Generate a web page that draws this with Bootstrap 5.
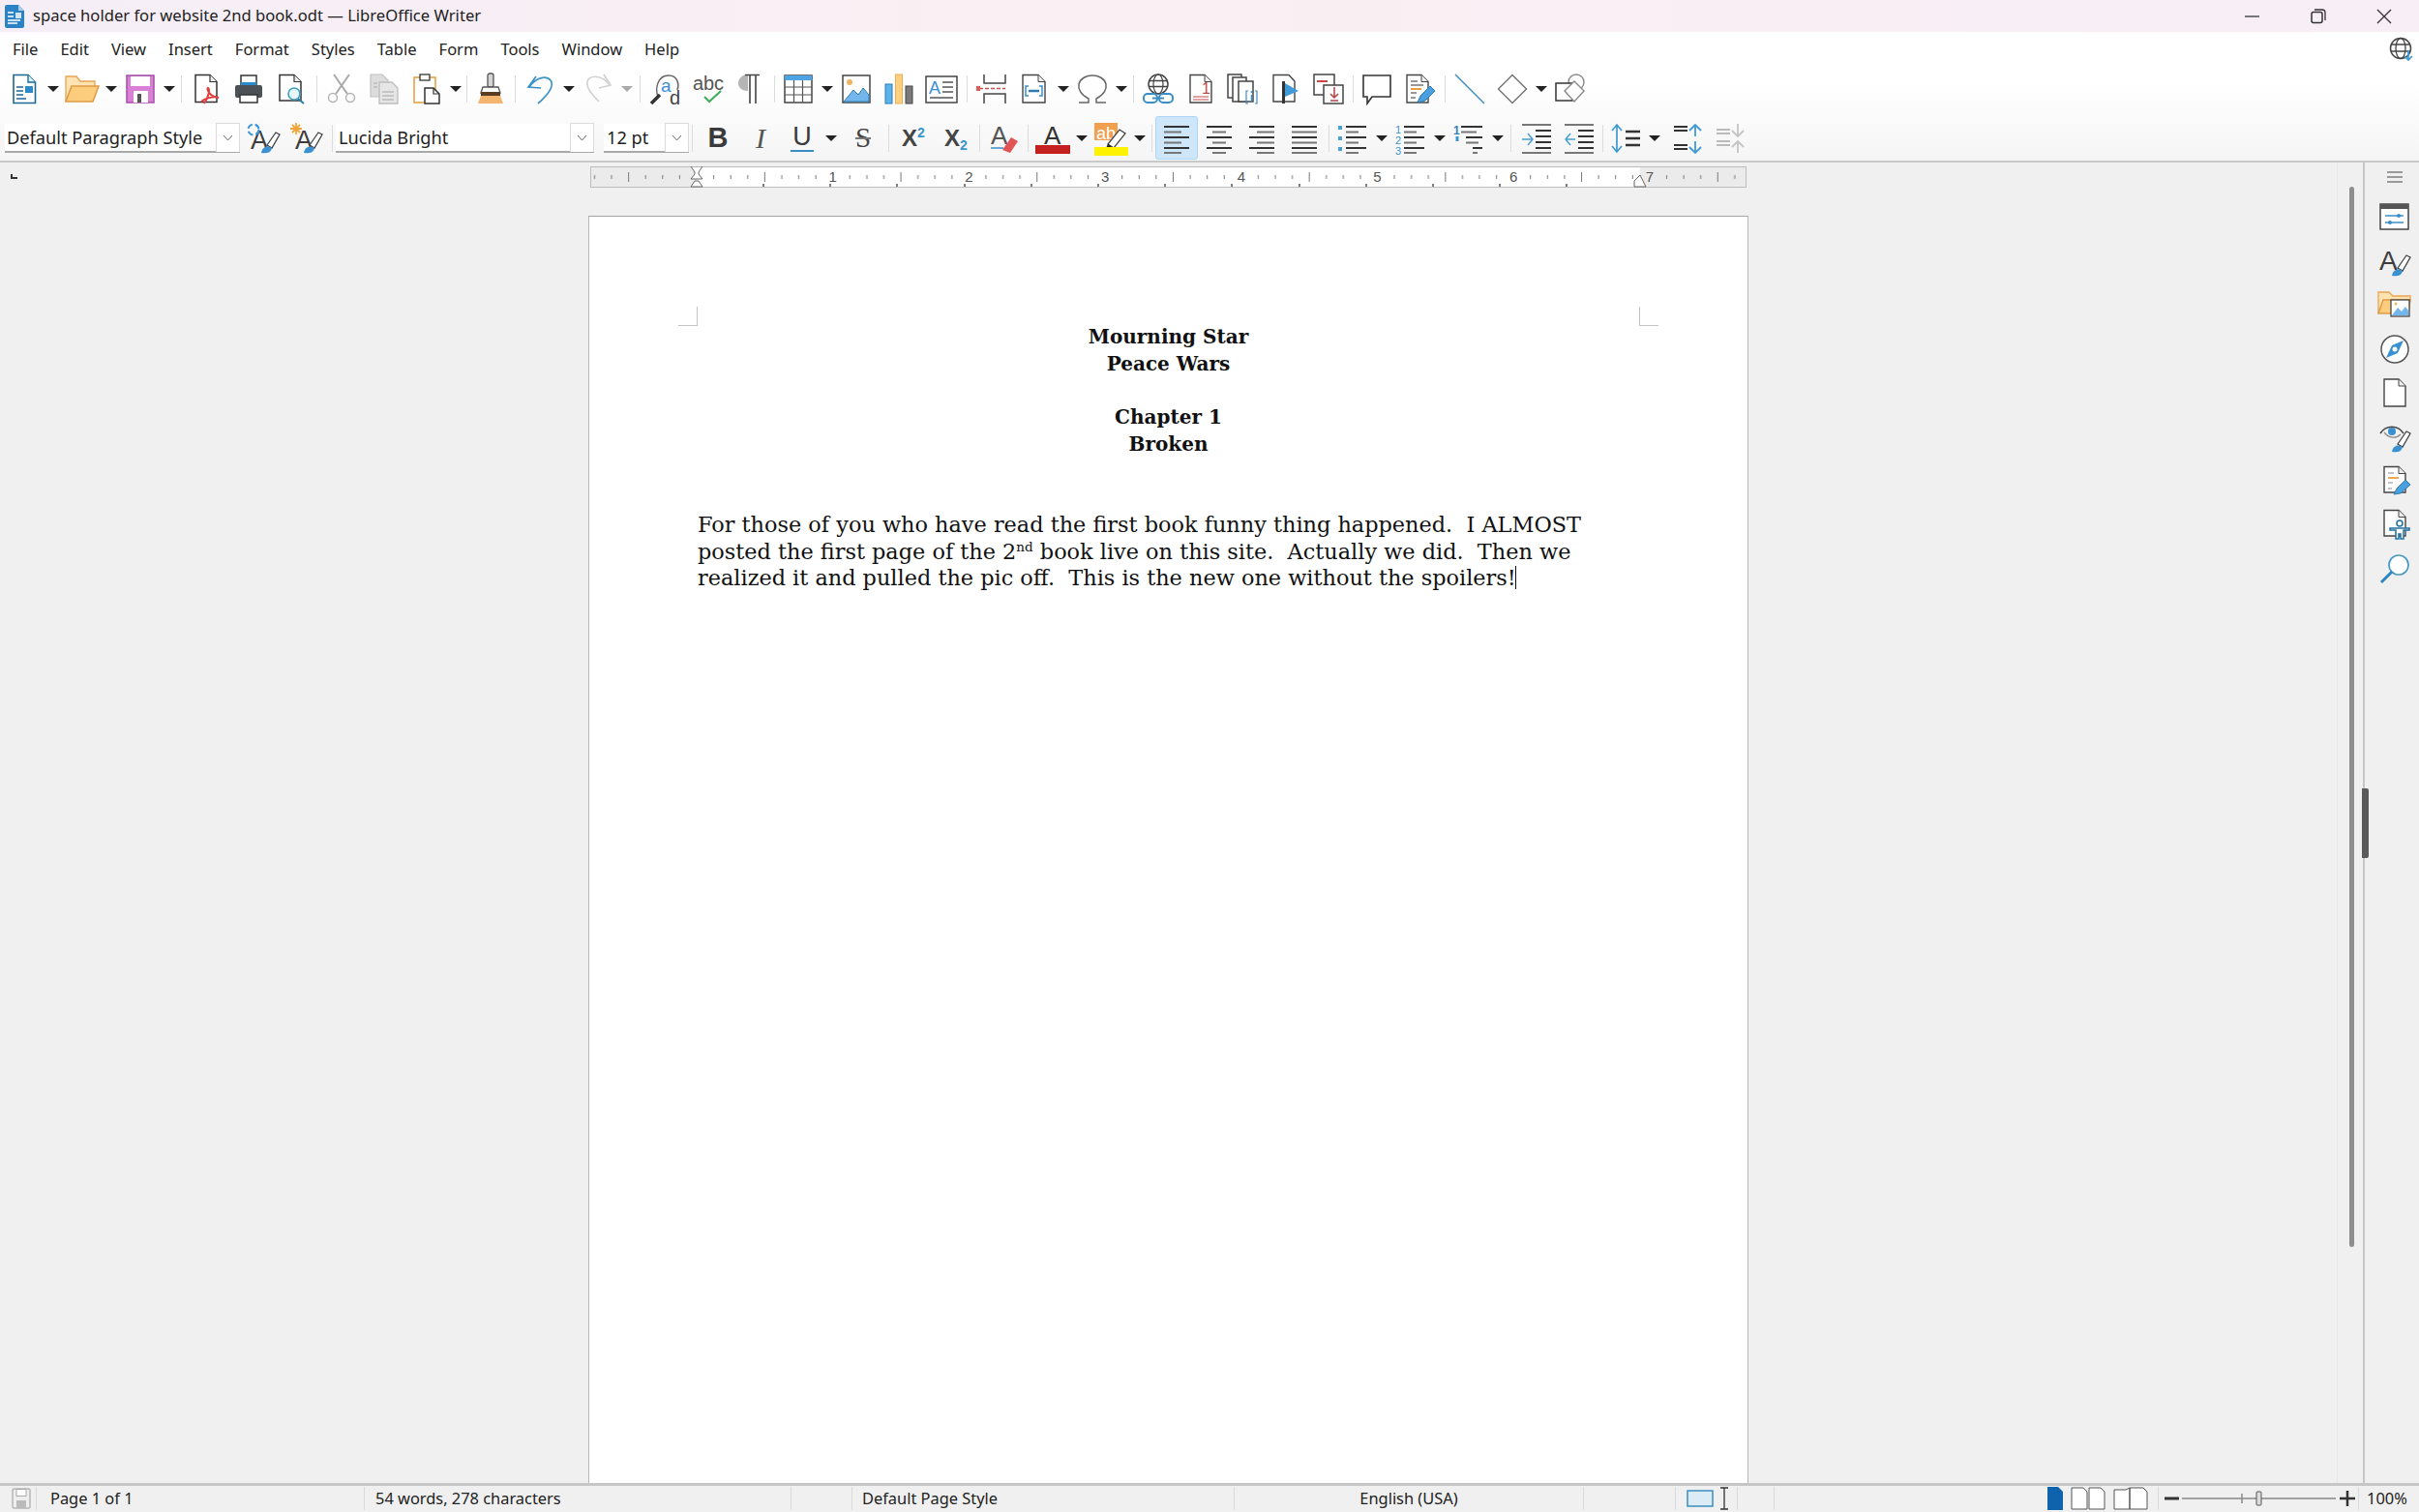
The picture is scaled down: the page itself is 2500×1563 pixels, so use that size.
<!DOCTYPE html>
<html lang="en">
<head>
<meta charset="utf-8">
<title>space holder for website 2nd book.odt — LibreOffice Writer</title>
<link href="https://cdn.jsdelivr.net/npm/bootstrap@5.3.0/dist/css/bootstrap.min.css" rel="stylesheet">
<style>
html,body{height:100%;overflow:hidden}
body{font-family:"Noto Sans","Open Sans",sans-serif;color:#222;background:#f0f0f0;font-size:16px}
symbol{overflow:visible}
.ico{width:32px;height:32px;overflow:visible;flex:none;display:block}
.app{height:1563px}
.titlebar{height:33px;background:linear-gradient(90deg,#f6eef7,#faf0f3 45%,#f7eef6);font-size:16.6px;padding-left:4px;padding-right:2px}
.title-ico{width:22px;height:24px;margin-right:8px}
.win-btn{width:68px;display:flex;justify-content:center}
.chrome{background:linear-gradient(180deg,#fff 0,#fff 40%,#f5f5f5 100%);height:135px;border-bottom:2px solid #c9c9c9}
.menubar{height:36px;padding:0 5px 0 13px;font-size:16.5px;gap:23px}
.menubar a{color:#222;text-decoration:none}
.globe{width:26px;height:26px}
.tb1{height:46px;padding-left:3px}
.tb2{height:47px;margin-top:4px;padding-left:5px}
.tbtn{width:44px;height:45px;padding:0;border:1px solid transparent;border-radius:3px;display:flex;align-items:center;justify-content:center;flex:none;color:#333}
.tbtn.on{background:#cde6fa;border-color:#acd6f5}
.tarr{width:16px;height:45px;flex:none;display:flex;align-items:center;justify-content:center}
.tarr::after{content:"";border-left:6px solid transparent;border-right:6px solid transparent;border-top:6px solid #222}
.tarr.dim::after{border-top-color:#aaa}
.tsep{height:45px;flex:none;display:flex;align-items:center;justify-content:center}
.tsep::after{content:"";width:1px;height:28px;background:#dcdcdc}
.w3{width:3px}.w3::after,.w4n::after{display:none}
.w4,.w4n{width:4px}.w5{width:5px}.w6{width:6px}.w7{width:7px}.w8{width:8px}.w10{width:10px}
.combo{height:30px;background:#fff;border-bottom:2px solid #a9a9a9;font-size:18.2px;display:flex;align-items:center;flex:none;color:#222}
.combo-text{flex:1;padding-left:2px;padding-top:2px;white-space:nowrap;overflow:hidden}
.combo-btn{width:25px;height:30px;border:1px solid #dcdcdc;border-bottom:0;display:flex;align-items:center;justify-content:center;background:#fff}
.combo-btn svg{width:11px;height:7px}
.c-para{width:243px;margin-right:3px}
.c-font{width:267px;margin-right:10px}
.c-size{width:88px}
.c-font .combo-text,.c-size .combo-text{padding-left:3px}
.fmt{font-family:"Liberation Sans",sans-serif;font-size:27px;line-height:1;color:#3a3a3a}
.fmt-b{font-weight:700;font-size:29px;padding-left:2px}
.fmt-i{font-style:italic;font-family:"Liberation Serif",serif;font-size:30px;color:#555;padding-left:2px}
.fmt-u{border-bottom:2px solid #3a8fc9;line-height:27px;padding:0 2px;display:block}
.fmt-s{text-decoration:line-through;text-decoration-color:#777;font-family:"Liberation Serif",serif;font-size:29px;color:#444}
.fmt-x{font-size:24px;font-weight:700;color:#444}
.fmt-x sup,.fmt-x sub{font-size:14px;color:#3a96cf;top:-.6em;position:relative;vertical-align:baseline}
.fmt-x sub{top:.3em}
.workspace{flex:1;min-height:0}
.doc-col{width:2415px;background:#f0f0f0;min-height:0}
.ruler-row{height:55px;padding-top:4px}
.ruler-mark{width:7px;height:5px;border-left:2px solid #333;border-bottom:2px solid #333;position:absolute;left:11px;top:180px}
.ruler{width:1195px;height:22px;display:block}
.page{width:1199px;flex:1;background:#fff;border:1px solid #b8b8b8;border-top-color:#a4a4a4;border-bottom:0;padding:111px 112px 112px;position:relative;font-family:"DejaVu Serif","Liberation Serif",serif;font-size:22.4px;line-height:27.7px;color:#111;min-height:0}
.crop{position:absolute;width:20px;height:20px;top:93px;border:0 solid #c4c4c4}
.crop-l{left:92px;border-right-width:1px;border-bottom-width:1px}
.crop-r{right:92px;border-left-width:1px;border-bottom-width:1px}
.head-text{font-weight:700;text-align:center;font-size:20px}
.body-text{white-space:nowrap;margin-top:55.4px}
.body-text sup{font-size:13.5px;top:-.6em;line-height:0}
.caret-bar{display:inline-block;width:1px;height:24px;background:#111;vertical-align:-4px;margin-left:-1px}
.scroll-col{width:27px;background:#f0f0f0;border-left:1px solid #e6e6e6;display:flex;justify-content:center;padding-top:25px;padding-left:2px;padding-right:0}
.scroll-thumb{width:5px;height:1096px;background:#8e8e8e;border-radius:3px}
.side-col{flex:1;background:#f0f0f0;border-left:2px solid #c6c6c6;position:relative;padding:3px 0 0 6px}
.side-ham{height:24px;margin-bottom:7px;display:flex;align-items:center;justify-content:center}
.side-ico{height:45.4px;display:flex;align-items:center;justify-content:center}
.side-grip{position:absolute;left:-3px;top:647px;width:7px;height:72px;background:#5a5a5a;border-radius:0 2px 2px 0}
.statusbar{height:30px;border-top:3px solid #c6c6c6;background:#f0f0f0;font-size:16.4px;flex:none}
.seg{height:24px;border-right:1px solid #dadada;display:flex;align-items:center;flex:none;white-space:nowrap;overflow:visible;margin-top:1px}
.s1{width:38px;padding-left:12px}
.s2{width:339px;padding-left:14px}
.s3{width:441px;padding-left:11px}
.s4{width:63px}
.s5{width:395px;padding-left:10px}
.s6{width:361px;justify-content:center}
.s7{width:95px}
.s8{width:64px;padding-left:11px;gap:6px}
.s9{width:38px}
.s10{width:397px;justify-content:flex-end;gap:8px;padding-right:10px}
.s11{width:207px;padding-left:6px}
.s12{flex:1;border-right:0;padding-left:8px}
</style>
</head>
<body>
<svg class="d-none" xmlns="http://www.w3.org/2000/svg">
<symbol id="new" viewBox="0 0 32 32" overflow="visible"><path d="M5 1.5H20L27.5 9V30.5H5Z" fill="#fff" stroke="#1b6a96" stroke-width="1.6"/><path d="M20 1.5V9H27.5" fill="#dff0fa" stroke="#1b6a96" stroke-width="1.4"/><path d="M8 14H15M8 18H15M8 22H15M8 26H18" stroke="#1b6a96" stroke-width="1.5"/><rect x="17" y="13" width="8" height="7" fill="#2e8bc9"/></symbol>
<symbol id="open" viewBox="0 0 32 32" overflow="visible"><path d="M-1 29V3H10L14 8H29V14H5Z" fill="#fde3b1" stroke="#e8a552" stroke-width="1.3"/><path d="M-1 29L5 13H33L27 29Z" fill="#fbcd7c" stroke="#e09a45" stroke-width="1.5"/></symbol>
<symbol id="save" viewBox="0 0 32 32" overflow="visible"><rect x="2" y="2" width="28" height="28" fill="#d97fd6" stroke="#a450a8" stroke-width="1.5"/><rect x="6" y="3" width="20" height="10" fill="#fff"/><rect x="9" y="18" width="15" height="12" fill="#fff"/><rect x="13" y="21" width="4" height="9" fill="#555"/></symbol>
<symbol id="pdf" viewBox="0 0 32 32" overflow="visible"><path d="M5 1.5H20L27 8.5V29.5H5Z" fill="#fff" stroke="#333" stroke-width="1.5"/><path d="M20 1.5V8.500H27" fill="#eee" stroke="#333" stroke-width="1.2"/><path d="M14 31C19 24 20 16 18 15C16 15 19 24 29 25C23 23 14 26 11 29" fill="none" stroke="#e23d3d" stroke-width="2"/></symbol>
<symbol id="print" viewBox="0 0 32 32" overflow="visible"><rect x="8" y="2" width="16" height="12" fill="#fff" stroke="#333" stroke-width="1.5"/><rect x="8" y="9" width="16" height="3" fill="#2b8bcc"/><rect x="2" y="12" width="28" height="13" rx="2" fill="#4b5157"/><rect x="7" y="22" width="18" height="8" fill="#fff" stroke="#333" stroke-width="1.5"/></symbol>
<symbol id="prev" viewBox="0 0 32 32" overflow="visible"><path d="M4 1.500H19L26 8.500V28H4Z" fill="#fff" stroke="#333" stroke-width="1.500"/><path d="M19 1.500V8.500H26" fill="#eee" stroke="#333" stroke-width="1.200"/><circle cx="19" cy="21" r="6" fill="#e8f7fb" stroke="#3aa0c2" stroke-width="1.600"/><path d="M23 26L29 31" stroke="#2c7da8" stroke-width="2"/></symbol>
<symbol id="cut" viewBox="0 0 32 32" overflow="visible"><path d="M8 1L22 21M24 1L10 21" stroke="#a9a9a9" stroke-width="2"/><circle cx="7" cy="25" r="4.500" fill="none" stroke="#b5b5b5" stroke-width="1.500"/><circle cx="25" cy="25" r="4.500" fill="none" stroke="#b5b5b5" stroke-width="1.500"/></symbol>
<symbol id="copy" viewBox="0 0 32 32" overflow="visible"><path d="M2 1H14L20 7V24H2Z" fill="#ddd" stroke="#c2c2c2" stroke-width="1.200"/><path d="M11 9H24L30 15V31H11Z" fill="#e6e6e6" stroke="#bdbdbd" stroke-width="1.300"/><path d="M14 19H26M14 23H26M14 27H26M5 10H9M5 14H9" stroke="#bbb" stroke-width="1.300"/></symbol>
<symbol id="paste" viewBox="0 0 32 32" overflow="visible"><rect x="3" y="4" width="22" height="26" fill="#fff" stroke="#e6a445" stroke-width="1.600"/><rect x="9" y="1" width="10" height="6" fill="#fff" stroke="#444" stroke-width="1.400"/><path d="M14 15H23L29 21V31H14Z" fill="#fff" stroke="#333" stroke-width="1.500"/><path d="M23 15V21H29" fill="none" stroke="#333" stroke-width="1.200"/></symbol>
<symbol id="clone" viewBox="0 0 32 32" overflow="visible"><rect x="13" y="0" width="6" height="14" rx="2" fill="#d5d5d5" stroke="#555" stroke-width="1.300"/><path d="M6 20L8 14H24L26 20Z" fill="#fff" stroke="#555" stroke-width="1.300"/><rect x="6" y="19" width="20" height="4" fill="#5b3c1e"/><path d="M6 23H26L29 31H3Z" fill="#f3b56f"/></symbol>
<symbol id="undo" viewBox="0 0 32 32" overflow="visible"><path d="M12 3L4 14L17 15M5 14C11 5 22 1 27 7C32 14 22 24 14 31" fill="none" stroke="#3d93c8" stroke-width="1.700"/></symbol>
<symbol id="redo" viewBox="0 0 32 32" overflow="visible"><path d="M22 1L29 12L17 15M28 12C22 3 11 1 6 6C2 13 9 21 17 29" fill="none" stroke="#d2d2d2" stroke-width="1.700"/></symbol>
<symbol id="find" viewBox="0 0 32 32" overflow="visible"><path d="M8 24C5 16 7 2 19 2C29 2 30 12 28 17" fill="none" stroke="#666" stroke-width="1.400"/><path d="M1 31L10 22" stroke="#333" stroke-width="3.500"/><text x="11" y="19" font-family="Liberation Sans,sans-serif" font-size="19" fill="#3c8fd6">a</text><text x="20" y="32" font-family="Liberation Sans,sans-serif" font-size="20" fill="#444">d</text></symbol>
<symbol id="spell" viewBox="0 0 32 32" overflow="visible"><text x="0" y="17" font-family="Liberation Sans,sans-serif" font-size="20" fill="#555" textLength="32">abc</text><path d="M12 24L17 29L29 18" fill="none" stroke="#3fae5a" stroke-width="2"/></symbol>
<symbol id="pilcrow" viewBox="0 0 32 32" overflow="visible"><path d="M13 1C6 1 3 6 3 10C3 14 6 18 13 18Z" fill="#b5b5b5"/><path d="M10 1.500H25M15 1.500V31M21 1.500V31" stroke="#444" stroke-width="1.600" fill="none"/></symbol>
<symbol id="table" viewBox="0 0 32 32" overflow="visible"><rect x="2" y="2" width="28" height="28" fill="#fff" stroke="#444" stroke-width="1.500"/><rect x="2" y="2" width="28" height="5" fill="#4da3e4"/><path d="M2 14H30M2 22H30M11.500 7V30M20.500 7V30" stroke="#555" stroke-width="1.200"/></symbol>
<symbol id="image" viewBox="0 0 32 32" overflow="visible"><rect x="2" y="2" width="28" height="28" fill="#fff" stroke="#444" stroke-width="1.500"/><circle cx="9" cy="9" r="3" fill="#f0b35f"/><path d="M3 29L13 17L18 22L23 15L29 22V29Z" fill="#72b6ec" stroke="#2d7fb6" stroke-width="1"/></symbol>
<symbol id="chart" viewBox="0 0 32 32" overflow="visible"><rect x="2" y="11" width="7" height="20" fill="#5eb2ec" stroke="#2a7cb4"/><rect x="12.500" y="1" width="7" height="30" fill="#fdd07f" stroke="#e9ae55"/><rect x="23" y="13" width="7" height="18" fill="#7a7a7a" stroke="#444"/></symbol>
<symbol id="textbox" viewBox="0 0 32 32" overflow="visible"><rect x="0" y="3" width="32" height="27" fill="#fff" stroke="#444" stroke-width="1.500"/><text x="3" y="21" font-family="Liberation Sans,sans-serif" font-size="18" fill="#3c8fd6">A</text><path d="M17 9H28M17 14H28M17 19H28M4 25H28" stroke="#555" stroke-width="1.500"/></symbol>
<symbol id="break" viewBox="0 0 32 32" overflow="visible"><path d="M8 1V10H30V1M8 31V21H30V31" fill="none" stroke="#444" stroke-width="1.500"/><path d="M3 15.500H30" stroke="#c45050" stroke-width="1.300" stroke-dasharray="4 2"/><rect x="0" y="13" width="4" height="5" fill="#e05a5a"/></symbol>
<symbol id="field" viewBox="0 0 32 32" overflow="visible"><path d="M4 1.500H20L27 8.500V30H4Z" fill="#fff" stroke="#444" stroke-width="1.400"/><path d="M20 1.500V8.500H27" fill="#eee" stroke="#444"/><path d="M10 13H7V23H10M21 13H24V23H21" fill="none" stroke="#3a8ec8" stroke-width="1.500"/><path d="M10 18H21" stroke="#2e7bb0" stroke-width="2.500"/></symbol>
<symbol id="omega" viewBox="0 0 32 32" overflow="visible"><path d="M2 30H12V26C4 22 1 16 2 11C5 -1 27 -1 30 11C31 16 28 22 20 26V30H30" fill="none" stroke="#666" stroke-width="1.500"/></symbol>
<symbol id="link" viewBox="0 0 32 32" overflow="visible"><circle cx="16" cy="11" r="10" fill="none" stroke="#444" stroke-width="1.500"/><ellipse cx="16" cy="11" rx="5" ry="10" fill="none" stroke="#444" stroke-width="1.200"/><path d="M6 7.500H26M6 13.500H26" stroke="#444" stroke-width="1.500"/><rect x="1" y="21" width="14" height="9" rx="4" fill="#fff" stroke="#3a8ec8" stroke-width="2"/><rect x="17" y="21" width="14" height="9" rx="4" fill="#fff" stroke="#3a8ec8" stroke-width="2"/><path d="M10 25.500H22" stroke="#3a8ec8" stroke-width="2"/></symbol>
<symbol id="foot" viewBox="0 0 32 32" overflow="visible"><path d="M5 1.500H20L27 8.500V30H5Z" fill="#fff" stroke="#444" stroke-width="1.400"/><path d="M20 1.500V8.500H27" fill="#eee" stroke="#444"/><text x="17" y="21" font-family="Liberation Sans,sans-serif" font-size="16" fill="#c84848">1</text><path d="M8 24H24M8 27H24" stroke="#c84848" stroke-width="1.200"/></symbol>
<symbol id="endn" viewBox="0 0 32 32" overflow="visible"><rect x="0" y="1" width="14" height="24" fill="#fff" stroke="#444" stroke-width="1.500"/><rect x="5" y="4" width="14" height="25" fill="#fff" stroke="#444" stroke-width="1.500"/><rect x="11" y="8" width="15" height="21" fill="#fff" stroke="#444" stroke-width="1.500"/><path d="M21 18H19V31H21M28 18H30V31H28" fill="none" stroke="#3a8ec8" stroke-width="1.200"/><path d="M24.500 22V29M24.500 18V20" stroke="#3a8ec8" stroke-width="1.500"/></symbol>
<symbol id="bookm" viewBox="0 0 32 32" overflow="visible"><path d="M3 1.500H19L25 8V29H3Z" fill="#fff" stroke="#444" stroke-width="1.400"/><rect x="12" y="8" width="3" height="23" fill="#333"/><path d="M15 10L29 18L15 24Z" fill="#3f9ad9"/></symbol>
<symbol id="xref" viewBox="0 0 32 32" overflow="visible"><rect x="1" y="1" width="21" height="21" fill="#fff" stroke="#444" stroke-width="1.500"/><rect x="11" y="12" width="20" height="19" fill="#fff" stroke="#444" stroke-width="1.500"/><path d="M4 8H15" stroke="#c84848" stroke-width="2"/><path d="M22 14V24M18 21L22 25L26 21M18 28H26" stroke="#b84040" stroke-width="1.500" fill="none"/></symbol>
<symbol id="comment" viewBox="0 0 32 32" overflow="visible"><path d="M2 2H30V24H11L6 31V24H2Z" fill="#fff" stroke="#333" stroke-width="1.600"/></symbol>
<symbol id="track" viewBox="0 0 32 32" overflow="visible"><path d="M3 1.500H18L25 8.500V30H3Z" fill="#fff" stroke="#444" stroke-width="1.400"/><path d="M18 1.500V8.500H25" fill="#eee" stroke="#444"/><path d="M7 8H14M7 12H20M7 20H13M7 25H12" stroke="#777" stroke-width="1.300"/><path d="M7 16H18" stroke="#ea9f3f" stroke-width="2"/><path d="M14 30L17 23L27 13L32 18L22 28Z" fill="#4a9fdf" stroke="#2b7cb4"/></symbol>
<symbol id="line" viewBox="0 0 32 32" overflow="visible"><path d="M1 1L31 31" stroke="#3f8dbe" stroke-width="1.500"/></symbol>
<symbol id="diamond" viewBox="0 0 32 32" overflow="visible"><path d="M16 1.500L30.500 16L16 30.500L1.500 16Z" fill="#fff" stroke="#777" stroke-width="1.500"/></symbol>
<symbol id="shapes" viewBox="0 0 32 32" overflow="visible"><circle cx="22" cy="9" r="8" fill="#fff" stroke="#888" stroke-width="1.400"/><rect x="1" y="10" width="17" height="18" fill="#fff" stroke="#333" stroke-width="1.500"/><path d="M20 8L30 18L20 29L10 18Z" fill="#fff" stroke="#888" stroke-width="1.400"/></symbol>
<symbol id="brush" viewBox="0 0 32 32" overflow="visible"><path d="M19 23L28 10L32 12L24 26Z" fill="#fff" stroke="#444" stroke-width="1.300"/><path d="M13 31C14 25 19 23 24 26C23 31 18 32 13 31Z" fill="#3a91d2"/></symbol>
<symbol id="stup" viewBox="0 0 32 32" overflow="visible"><text x="2" y="27" font-family="Liberation Sans,sans-serif" font-size="27" fill="#3d3d3d">A</text><use href="#brush"/><circle cx="5" cy="7" r="5.500" fill="none" stroke="#3a96d6" stroke-width="2" stroke-dasharray="6 3"/></symbol>
<symbol id="stnew" viewBox="0 0 32 32" overflow="visible"><text x="4" y="27" font-family="Liberation Sans,sans-serif" font-size="27" fill="#3d3d3d">A</text><use href="#brush"/><path d="M5 0V12M-1 6H11M1 2L9 10M9 2L1 10" stroke="#f0a63c" stroke-width="1.800"/></symbol>
<symbol id="clear" viewBox="0 0 32 32" overflow="visible"><text x="3" y="22" font-family="Liberation Sans,sans-serif" font-size="26" fill="#555">A</text><path d="M3 26H16" stroke="#3a8ec8" stroke-width="1.500"/><path d="M15 28L24 15L31 19L23 31Z" fill="#e25454"/></symbol>
<symbol id="fcolor" viewBox="0 0 32 32" overflow="visible"><text x="7" y="22" font-family="Liberation Sans,sans-serif" font-size="26" fill="#333">A</text><rect x="-2" y="23" width="36" height="9" fill="#c42020"/></symbol>
<symbol id="hilite" viewBox="0 0 32 32" overflow="visible"><rect x="-1" y="0" width="24" height="18" fill="#f0a04f"/><text x="1" y="17" font-family="Liberation Sans,sans-serif" font-size="18" fill="#fff">ab</text><path d="M13 22L25 7L31 11L19 26Z" fill="#fff" stroke="#444" stroke-width="1.300"/><path d="M13 22L19 26L11 26Z" fill="#222"/><rect x="-1" y="25" width="35" height="9" fill="#fff200"/></symbol>
<symbol id="al" viewBox="0 0 32 32" overflow="visible"><path d="M3 4H29M3 15H29M3 26H29" stroke="#333" stroke-width="2"/><path d="M3 9.500H21M3 20.500H21M3 31H21" stroke="#777" stroke-width="2"/></symbol>
<symbol id="ac" viewBox="0 0 32 32" overflow="visible"><path d="M3 4H29M3 15H29M3 26H29" stroke="#333" stroke-width="2"/><path d="M9 9.500H23M9 20.500H23M9 31H23" stroke="#777" stroke-width="2"/></symbol>
<symbol id="ar" viewBox="0 0 32 32" overflow="visible"><path d="M3 4H29M3 15H29M3 26H29" stroke="#333" stroke-width="2"/><path d="M11 9.500H29M11 20.500H29M11 31H29" stroke="#777" stroke-width="2"/></symbol>
<symbol id="aj" viewBox="0 0 32 32" overflow="visible"><path d="M3 4H29M3 15H29M3 26H29" stroke="#333" stroke-width="2"/><path d="M3 9.500H29M3 20.500H29M3 31H29" stroke="#777" stroke-width="2"/></symbol>
<symbol id="bull" viewBox="0 0 32 32" overflow="visible"><path d="M1 5H5M1 16H5M1 27H5" stroke="#4a9fd4" stroke-width="4"/><path d="M9 4H30M9 15H30M9 26H30" stroke="#333" stroke-width="2"/><path d="M9 9.500H22M9 20.500H22M9 31H22" stroke="#777" stroke-width="2"/></symbol>
<symbol id="numb" viewBox="0 0 32 32" overflow="visible"><text x="0" y="11" font-family="Liberation Sans,sans-serif" font-size="11" fill="#3a96cf">1</text><text x="0" y="22" font-family="Liberation Sans,sans-serif" font-size="11" fill="#3a96cf">2</text><text x="0" y="33" font-family="Liberation Sans,sans-serif" font-size="11" fill="#3a96cf">3</text><path d="M9 4H30M9 15H30M9 26H30" stroke="#333" stroke-width="2"/><path d="M9 9.500H22M9 20.500H22M9 31H22" stroke="#777" stroke-width="2"/></symbol>
<symbol id="outl" viewBox="0 0 32 32" overflow="visible"><text x="0" y="12" font-family="Liberation Sans,sans-serif" font-size="12" font-weight="700" fill="#2e83bd">1</text><path d="M8 4H30M13 15H30M20 26H30" stroke="#333" stroke-width="2"/><path d="M8 9.500H24M13 20.500H26M20 31H25" stroke="#777" stroke-width="2"/><path d="M4 14V19" stroke="#3a96cf" stroke-width="3"/></symbol>
<symbol id="indi" viewBox="0 0 32 32" overflow="visible"><path d="M1 2H31M1 31H31" stroke="#777" stroke-width="2"/><path d="M15 8H31M15 14H31M15 20H31M15 26H31" stroke="#333" stroke-width="1.800"/><path d="M1 17H11M7 11L12 17L7 23" fill="none" stroke="#4a9fd4" stroke-width="1.500"/></symbol>
<symbol id="indd" viewBox="0 0 32 32" overflow="visible"><path d="M1 2H31M1 31H31" stroke="#777" stroke-width="2"/><path d="M15 8H31M15 14H31M15 20H31M15 26H31" stroke="#333" stroke-width="1.800"/><path d="M12 17H2M7 11L2 17L7 23" fill="none" stroke="#4a9fd4" stroke-width="1.500"/></symbol>
<symbol id="lsp" viewBox="0 0 32 32" overflow="visible"><path d="M7 2V30M2 8L7 2L12 8M2 24L7 30L12 24" fill="none" stroke="#3f9ad4" stroke-width="1.700"/><path d="M16 9H31M16 16H31M16 23H31" stroke="#333" stroke-width="2.500"/></symbol>
<symbol id="pinc" viewBox="0 0 32 32" overflow="visible"><path d="M2 4H16M2 8H16M2 23H16M2 27H16" stroke="#333" stroke-width="2"/><path d="M24 2V14M18 8L24 2L30 8M24 19V31M18 25L24 31L30 25" fill="none" stroke="#3f9ad4" stroke-width="1.800"/></symbol>
<symbol id="pdec" viewBox="0 0 32 32" overflow="visible"><path d="M2 7H16M2 11H16M2 19H16M2 23H16" stroke="#bbb" stroke-width="2"/><path d="M24 1V13M18 8L24 14L30 8M24 19V31M18 25L24 19L30 25" fill="none" stroke="#c4c4c4" stroke-width="1.800"/></symbol>
<symbol id="sdeck" viewBox="0 0 32 32" overflow="visible"><rect x="1" y="2" width="29" height="26" fill="#fff" stroke="#444" stroke-width="1.500"/><rect x="1" y="2" width="29" height="5" fill="#555"/><path d="M6 14H25M6 21H25" stroke="#3a8ec8" stroke-width="1.300"/><circle cx="20" cy="14" r="2" fill="#3a8ec8"/><circle cx="11" cy="21" r="2" fill="#3a8ec8"/></symbol>
<symbol id="sstyle" viewBox="0 0 32 32" overflow="visible"><text x="0" y="25" font-family="Liberation Sans,sans-serif" font-size="28" fill="#3d3d3d">A</text><use href="#brush"/></symbol>
<symbol id="sgal" viewBox="0 0 32 32" overflow="visible"><path d="M-1 25V3H10L14 7H32V12H4Z" fill="#fde3b1" stroke="#e8a552" stroke-width="1.300"/><path d="M-1 25L4 11H32L30 25Z" fill="#fbcd7c" stroke="#e09a45" stroke-width="1.300"/><rect x="12" y="11" width="19" height="17" fill="#fff" stroke="#444" stroke-width="1.300"/><path d="M13 27L19 19L23 23L27 18L30 22V27Z" fill="#72b6ec"/><circle cx="17" cy="15" r="1.500" fill="#f0b35f"/></symbol>
<symbol id="snav" viewBox="0 0 32 32" overflow="visible"><ellipse cx="16" cy="16" rx="14" ry="14" fill="#fff" stroke="#555" stroke-width="1.500"/><path d="M25 7L19 20L7 25L13 12Z" fill="#3a91d2"/><circle cx="16" cy="16" r="2.500" fill="#fff"/></symbol>
<symbol id="spage" viewBox="0 0 32 32" overflow="visible"><path d="M5 2H20L27 9V30H5Z" fill="#fff" stroke="#444" stroke-width="1.400"/><path d="M20 2V9H27" fill="#eee" stroke="#444"/></symbol>
<symbol id="sinsp" viewBox="0 0 32 32" overflow="visible"><path d="M1 12C7 3 19 3 25 12" fill="none" stroke="#444" stroke-width="1.600"/><path d="M5 11C10 17 17 18 22 13" fill="none" stroke="#888" stroke-width="1.200"/><circle cx="13" cy="10" r="4" fill="#3a91d2"/><use href="#brush"/></symbol>
<symbol id="strack" viewBox="0 0 32 32" overflow="visible"><path d="M5 1.500H20L27 8.500V28H5Z" fill="#fff" stroke="#444" stroke-width="1.400"/><path d="M20 1.500V8.500H27" fill="#eee" stroke="#444"/><path d="M9 8H15M9 18H14M9 24H13" stroke="#888" stroke-width="1.200"/><path d="M9 13H20" stroke="#ea9f3f" stroke-width="1.800"/><path d="M15 30L18 24L27 15L32 20L22 29Z" fill="#4a9fdf" stroke="#2b7cb4"/></symbol>
<symbol id="sacc" viewBox="0 0 32 32" overflow="visible"><path d="M5 1.500H20L27 8.500V28H5Z" fill="#fff" stroke="#444" stroke-width="1.400"/><path d="M20 1.500V8.500H27" fill="#eee" stroke="#444"/><circle cx="21" cy="15" r="3" fill="#fff" stroke="#1f6fa3" stroke-width="1.500"/><path d="M11 20H31V22H25V31H22V26H20V31H17V22H11Z" fill="#fff" stroke="#1f6fa3" stroke-width="1.500"/></symbol>
<symbol id="sfind" viewBox="0 0 32 32" overflow="visible"><circle cx="20" cy="12" r="10" fill="#fff" stroke="#4a9ac8" stroke-width="1.700"/><path d="M2 30L13 19" stroke="#2c87bf" stroke-width="3"/></symbol>
</svg>

<div class="app d-flex flex-column">
  <div class="titlebar d-flex align-items-center flex-none">
    <svg class="title-ico" viewBox="0 0 22 24"><path d="M1 2Q1 0 3 0H15L21 6V22Q21 24 19 24H3Q1 24 1 22Z" fill="#2b82c4"/><path d="M15 0V6H21Z" fill="#a8d0ee"/><path d="M4 8H10M4 12H10M4 16H17M4 19H14" stroke="#fff" stroke-width="1.300"/><rect x="12" y="8" width="6" height="6" fill="#cfe6f7"/></svg>
    <span>space holder for website 2nd book.odt — LibreOffice Writer</span>
    <div class="ms-auto d-flex align-items-center">
      <div class="win-btn"><svg width="16" height="16" viewBox="0 0 16 16"><path d="M0 8H15" stroke="#333" stroke-width="1.300"/></svg></div>
      <div class="win-btn"><svg width="16" height="16" viewBox="0 0 16 16"><rect x="1" y="3.500" width="11" height="11" rx="2" fill="none" stroke="#333" stroke-width="1.500"/><path d="M4 1H12Q15 1 15 4V12" fill="none" stroke="#333" stroke-width="1.300"/></svg></div>
      <div class="win-btn"><svg width="16" height="16" viewBox="0 0 16 16"><path d="M1 1L15 15M15 1L1 15" stroke="#333" stroke-width="1.300"/></svg></div>
    </div>
  </div>

  <div class="chrome flex-none">
    <nav class="menubar d-flex align-items-center">
      <a href="#">File</a><a href="#">Edit</a><a href="#">View</a><a href="#">Insert</a><a href="#">Format</a><a href="#">Styles</a><a href="#">Table</a><a href="#">Form</a><a href="#">Tools</a><a href="#">Window</a><a href="#">Help</a>
      <svg class="globe ms-auto me-n1" viewBox="0 0 26 26"><circle cx="12" cy="12" r="10.500" fill="#fff" stroke="#444" stroke-width="1.500"/><ellipse cx="12" cy="12" rx="5" ry="10.500" fill="none" stroke="#444" stroke-width="1.300"/><path d="M2 8H22M2 15H22" stroke="#444" stroke-width="1.300"/><path d="M20 14V24M16 20L20 24L24 20" fill="none" stroke="#3f9ad4" stroke-width="1.700"/></svg>
    </nav>
    <div class="tb1 d-flex align-items-center">
      <button class="btn tbtn"><svg class="ico"><use href="#new"/></svg></button><span class="tarr"></span>
      <button class="btn tbtn"><svg class="ico"><use href="#open"/></svg></button><span class="tarr"></span>
      <button class="btn tbtn"><svg class="ico"><use href="#save"/></svg></button><span class="tarr"></span>
      <span class="tsep w8"></span>
      <button class="btn tbtn"><svg class="ico"><use href="#pdf"/></svg></button>
      <button class="btn tbtn"><svg class="ico"><use href="#print"/></svg></button>
      <button class="btn tbtn"><svg class="ico"><use href="#prev"/></svg></button>
      <span class="tsep w8"></span>
      <button class="btn tbtn"><svg class="ico"><use href="#cut"/></svg></button>
      <button class="btn tbtn"><svg class="ico"><use href="#copy"/></svg></button>
      <button class="btn tbtn"><svg class="ico"><use href="#paste"/></svg></button><span class="tarr"></span>
      <span class="tsep w6"></span>
      <button class="btn tbtn"><svg class="ico"><use href="#clone"/></svg></button>
      <span class="tsep w7"></span>
      <button class="btn tbtn"><svg class="ico"><use href="#undo"/></svg></button><span class="tarr"></span>
      <button class="btn tbtn"><svg class="ico"><use href="#redo"/></svg></button><span class="tarr dim"></span>
      <span class="tsep w10"></span>
      <button class="btn tbtn"><svg class="ico"><use href="#find"/></svg></button>
      <button class="btn tbtn"><svg class="ico"><use href="#spell"/></svg></button>
      <button class="btn tbtn"><svg class="ico"><use href="#pilcrow"/></svg></button>
      <span class="tsep w5"></span>
      <button class="btn tbtn"><svg class="ico"><use href="#table"/></svg></button><span class="tarr"></span>
      <button class="btn tbtn"><svg class="ico"><use href="#image"/></svg></button>
      <button class="btn tbtn"><svg class="ico"><use href="#chart"/></svg></button>
      <button class="btn tbtn"><svg class="ico"><use href="#textbox"/></svg></button>
      <span class="tsep w8"></span>
      <button class="btn tbtn"><svg class="ico"><use href="#break"/></svg></button>
      <button class="btn tbtn"><svg class="ico"><use href="#field"/></svg></button><span class="tarr"></span>
      <button class="btn tbtn"><svg class="ico"><use href="#omega"/></svg></button><span class="tarr"></span>
      <span class="tsep w8"></span>
      <button class="btn tbtn"><svg class="ico"><use href="#link"/></svg></button>
      <button class="btn tbtn"><svg class="ico"><use href="#foot"/></svg></button>
      <button class="btn tbtn"><svg class="ico"><use href="#endn"/></svg></button>
      <button class="btn tbtn"><svg class="ico"><use href="#bookm"/></svg></button>
      <button class="btn tbtn"><svg class="ico"><use href="#xref"/></svg></button>
      <span class="tsep w6"></span>
      <button class="btn tbtn"><svg class="ico"><use href="#comment"/></svg></button>
      <button class="btn tbtn"><svg class="ico"><use href="#track"/></svg></button>
      <span class="tsep w8"></span>
      <button class="btn tbtn"><svg class="ico"><use href="#line"/></svg></button>
      <button class="btn tbtn"><svg class="ico"><use href="#diamond"/></svg></button><span class="tarr"></span>
      <button class="btn tbtn"><svg class="ico"><use href="#shapes"/></svg></button>
    </div>
    <div class="tb2 d-flex align-items-center">
      <div class="combo c-para"><span class="combo-text">Default Paragraph Style</span><span class="combo-btn"><svg viewBox="0 0 11 7"><path d="M1 1L5.500 6L10 1" fill="none" stroke="#666"/></svg></span></div>
      <button class="btn tbtn"><svg class="ico"><use href="#stup"/></svg></button>
      <button class="btn tbtn"><svg class="ico"><use href="#stnew"/></svg></button>
      <span class="tsep w8"></span>
      <div class="combo c-font"><span class="combo-text">Lucida Bright</span><span class="combo-btn"><svg viewBox="0 0 11 7"><path d="M1 1L5.500 6L10 1" fill="none" stroke="#666"/></svg></span></div>
      <div class="combo c-size"><span class="combo-text">12 pt</span><span class="combo-btn"><svg viewBox="0 0 11 7"><path d="M1 1L5.500 6L10 1" fill="none" stroke="#666"/></svg></span></div>
      <span class="tsep w7"></span>
      <button class="btn tbtn"><span class="fmt fmt-b">B</span></button>
      <button class="btn tbtn"><span class="fmt fmt-i">I</span></button>
      <button class="btn tbtn"><span class="fmt fmt-u">U</span></button><span class="tarr"></span>
      <span class="tsep w3"></span>
      <button class="btn tbtn"><span class="fmt fmt-s">S</span></button>
      <span class="tsep w8"></span>
      <button class="btn tbtn"><span class="fmt fmt-x">X<sup>2</sup></span></button>
      <button class="btn tbtn"><span class="fmt fmt-x">X<sub>2</sub></span></button>
      <span class="tsep w5"></span>
      <button class="btn tbtn"><svg class="ico"><use href="#clear"/></svg></button>
      <span class="tsep w7"></span>
      <button class="btn tbtn"><svg class="ico"><use href="#fcolor"/></svg></button><span class="tarr"></span>
      <button class="btn tbtn"><svg class="ico"><use href="#hilite"/></svg></button><span class="tarr"></span>
      <span class="tsep w8"></span>
      <button class="btn tbtn on"><svg class="ico"><use href="#al"/></svg></button>
      <button class="btn tbtn"><svg class="ico"><use href="#ac"/></svg></button>
      <button class="btn tbtn"><svg class="ico"><use href="#ar"/></svg></button>
      <button class="btn tbtn"><svg class="ico"><use href="#aj"/></svg></button>
      <span class="tsep w6"></span>
      <button class="btn tbtn"><svg class="ico"><use href="#bull"/></svg></button><span class="tarr"></span>
      <button class="btn tbtn"><svg class="ico"><use href="#numb"/></svg></button><span class="tarr"></span>
      <button class="btn tbtn"><svg class="ico"><use href="#outl"/></svg></button><span class="tarr"></span>
      <span class="tsep w10"></span>
      <button class="btn tbtn"><svg class="ico"><use href="#indi"/></svg></button>
      <button class="btn tbtn"><svg class="ico"><use href="#indd"/></svg></button>
      <span class="tsep w4"></span>
      <button class="btn tbtn"><svg class="ico"><use href="#lsp"/></svg></button><span class="tarr"></span>
      <span class="tsep w4n"></span>
      <button class="btn tbtn"><svg class="ico"><use href="#pinc"/></svg></button>
      <button class="btn tbtn"><svg class="ico"><use href="#pdec"/></svg></button>
    </div>
  </div>

  <div class="workspace d-flex">
    <div class="doc-col d-flex flex-column align-items-center">
      <span class="ruler-mark"></span>
      <div class="ruler-row flex-none">
        <svg class="ruler" viewBox="0 0 1195 22">
          <defs>
            <pattern id="rt" x="110" y="0" width="140.700" height="22" patternUnits="userSpaceOnUse">
              <path d="M17.590 9V13M35.180 9V13M52.760 9V13M87.940 9V13M105.500 9V13M123.100 9V13M70.350 6V16" stroke="#777" stroke-width="1"/>
            </pattern>
          </defs>
          <rect x="0.500" y="0.500" width="1194" height="21" fill="#ebebeb" stroke="#bdbdbd"/>
          <rect x="110" y="1" width="975" height="20" fill="#fff"/>
          <rect x="1" y="1" width="1193" height="20" fill="url(#rt)"/>
          <g font-family="Liberation Sans,sans-serif" font-size="15" fill="#555" text-anchor="middle"><text x="250.700" y="16">1</text><text x="391.400" y="16">2</text><text x="532.100" y="16">3</text><text x="672.800" y="16">4</text><text x="813.500" y="16">5</text><text x="954.200" y="16">6</text><text x="1094.900" y="16">7</text></g>
          <path d="M179 18V21M248 18V21M317 18V21M387 18V21M456 18V21M525 18V21M594 18V21M663 18V21M733 18V21M802 18V21M871 18V21M940 18V21M1009 18V21" stroke="#555" stroke-width="1.500"/>
          <path d="M104 0H116L112 6V8L116 13V13H104L108 8V6Z" fill="#fff" stroke="#666"/><path d="M104 21L108 15H112L116 21Z" fill="#fff" stroke="#666"/>
          <path d="M1079 21V15L1085 9L1091 21Z" fill="#fff" stroke="#666"/>
        </svg>
      </div>
      <main class="page">
        <span class="crop crop-l"></span><span class="crop crop-r"></span>
        <div class="head-text">Mourning Star<br>Peace Wars<br><br>Chapter 1<br>Broken</div>
        <p class="body-text mb-0">For those of you who have read the first book funny thing happened.&nbsp; I ALMOST<br>posted the first page of the 2<sup>nd</sup> book live on this site.&nbsp; Actually we did.&nbsp; Then we<br>realized it and pulled the pic off.&nbsp; This is the new one without the spoilers!<span class="caret-bar"></span></p>
      </main>
    </div>
    <div class="scroll-col"><div class="scroll-thumb"></div></div>
    <aside class="side-col">
      <span class="side-grip"></span>
      <div class="side-ham"><svg width="16" height="12" viewBox="0 0 16 12"><path d="M0 1H16M0 6H16M0 11H16" stroke="#444" stroke-width="1.200"/></svg></div>
      <div class="side-ico"><svg class="ico"><use href="#sdeck"/></svg></div>
      <div class="side-ico"><svg class="ico"><use href="#sstyle"/></svg></div>
      <div class="side-ico"><svg class="ico"><use href="#sgal"/></svg></div>
      <div class="side-ico"><svg class="ico"><use href="#snav"/></svg></div>
      <div class="side-ico"><svg class="ico"><use href="#spage"/></svg></div>
      <div class="side-ico"><svg class="ico"><use href="#sinsp"/></svg></div>
      <div class="side-ico"><svg class="ico"><use href="#strack"/></svg></div>
      <div class="side-ico"><svg class="ico"><use href="#sacc"/></svg></div>
      <div class="side-ico"><svg class="ico"><use href="#sfind"/></svg></div>
    </aside>
  </div>

  <footer class="statusbar d-flex">
    <div class="seg s1"><svg width="20" height="22" viewBox="0 0 20 22"><rect x="1" y="1" width="18" height="20" rx="1" fill="#eee" stroke="#9a9a9a"/><rect x="5" y="1.500" width="10" height="7" fill="#fff" stroke="#aaa"/><rect x="5" y="13" width="10" height="8" fill="#bbb"/></svg></div>
    <div class="seg s2">Page 1 of 1</div>
    <div class="seg s3">54 words, 278 characters</div>
    <div class="seg s4"></div>
    <div class="seg s5">Default Page Style</div>
    <div class="seg s6">English (USA)</div>
    <div class="seg s7"></div>
    <div class="seg s8"><svg width="28" height="18" viewBox="0 0 28 18"><rect x="1" y="1" width="26" height="16" fill="#dcecf6" stroke="#3a8ec0" stroke-width="1.500"/></svg><svg width="10" height="24" viewBox="0 0 10 24"><path d="M1 1H9M5 1V23M1 23H9" fill="none" stroke="#333" stroke-width="1.300"/></svg></div>
    <div class="seg s9"></div>
    <div class="seg s10"><svg width="16" height="24" viewBox="0 0 16 24"><path d="M0 0H11L16 5V24H0Z" fill="#0f62ac"/></svg><svg width="36" height="24" viewBox="0 0 36 24"><path d="M1 1H13L17 5V23H1ZM19 1H31L35 5V23H19Z" fill="#fff" stroke="#555"/></svg><svg width="36" height="24" viewBox="0 0 36 24"><path d="M1 3H13L17 1V23H1ZM17 1H31L35 5V23H17Z" fill="#fff" stroke="#555"/></svg></div>
    <div class="seg s11"><svg width="198" height="20" viewBox="0 0 198 20"><path d="M0 10H15" stroke="#333" stroke-width="3"/><path d="M18 10H177" stroke="#888" stroke-width="1.500"/><path d="M80 5V15" stroke="#888" stroke-width="1.500"/><rect x="95" y="3" width="5" height="14" rx="1" fill="#ddd" stroke="#555"/><path d="M181 10H197M189 2V18" stroke="#333" stroke-width="2.500"/></svg></div>
    <div class="seg s12">100%</div>
  </footer>
</div>
</body>
</html>
